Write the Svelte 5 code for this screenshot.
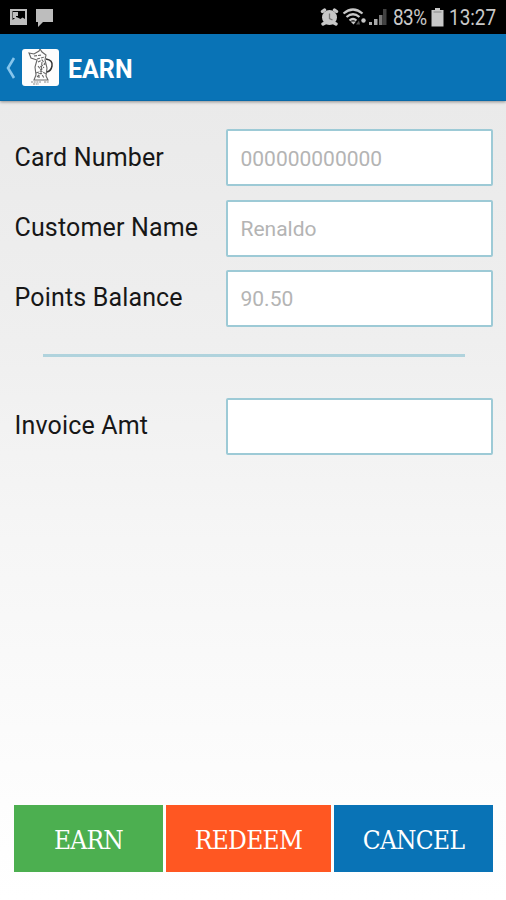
<script>
  const fields = [
    { label: 'Card Number', hint: '000000000000' },
    { label: 'Customer Name', hint: 'Renaldo' },
    { label: 'Points Balance', hint: '90.50' }
  ];
</script>

<div class="screen">
  <div class="status">
    <svg class="notes" width="46" height="20" viewBox="0 0 46 20" fill="#bdbdbd">
      <path fill-rule="evenodd" d="M1 1h17v16H1z M3.500 3v9l4-3 4 2 2-1.500L16 11V3z" />
      <path d="M4 4h5v4H7v2H4z" />
      <path d="M27 1h17v13H34l-5 5v-5h-2z" />
    </svg>
    <div class="right">
      <svg width="68" height="22" viewBox="0 0 68 22">
        <g fill="none" stroke="#c8c8c8" stroke-width="3.400" stroke-linecap="round">
          <path d="M3.500 3.500l2-1.500M17.500 3.500l-2-1.500M4 16l2-1M17 16l-2-1" />
        </g>
        <circle cx="10.500" cy="9.500" r="7.500" fill="#c8c8c8" />
        <path d="M10.500 5.500v5l3 1.500" fill="none" stroke="#777" stroke-width="1.300" />
        <g fill="none" stroke="#c8c8c8" stroke-width="2.200">
          <path d="M24.500 5.500q9.500-8 19 0" />
          <path d="M27.500 9q6.500-5.500 13 0" />
          <path d="M30.500 12.500q3.500-3 7 0" />
        </g>
        <path d="M31.500 13.500h5.500l-2.500 3z" fill="#c8c8c8" />
        <path d="M40 12.500l-3 4h4z" fill="#555" />
        <circle cx="44.500" cy="12.500" r="2.200" fill="#c8c8c8" />
        <path d="M50 17v-3h3v3z" fill="#aaa" />
        <path d="M55 17v-6h3.500v6z" fill="#aaa" />
        <path d="M60 17V7h3.500v10z" fill="#777" />
        <path d="M64 17V1h3.500v16z" fill="#414141" />
      </svg>
      <span class="pct">83%</span>
      <svg class="battery" width="13" height="19" viewBox="0 0 13 19" fill="#c8c8c8">
        <path d="M4 0h5v2h3.500v16.500h-12V2H4z" />
        <path d="M2.500 4h8" stroke="#888" />
      </svg>
      <span class="time">13:27</span>
    </div>
  </div>

  <header>
    <svg class="back" width="11" height="24" viewBox="0 0 11 24" fill="none" stroke="#86c5ec" stroke-width="2.600">
      <path d="M9 2L3 12l6 10" />
    </svg>
    <svg class="logo" width="37" height="37" viewBox="0 0 37 37">
      <rect width="37" height="37" rx="3" fill="#fdfdfd" />
      <g fill="none" stroke="#666" stroke-width="1.100">
        <path d="M7 4l5 1 5-3 1-2 2 3 4 3-1 5 2 8-1 8 2 4H12l2-5-1-8 2-7-6-2z" />
        <path d="M24 10q7 1 6 7-1 5-5 6" stroke="#333" stroke-width="1.500" />
        <path d="M12 7l8-1M15 10l8-2M16 13l4-2 3 4-5 3M16 17l3 4 3-3M20 13l-1 9M14 24l5-2 5 3M15 28l4-4 3 5M17 29v-5" stroke-dasharray="3 1" />
        <path d="M9 33h10M22 33h5M11 35h6" stroke="#888" stroke-dasharray="2 .7" />
      </g>
    </svg>
    <h1>EARN</h1>
  </header>

  <main>
    <form>
      {#each fields as field}
        <label>
          <span>{field.label}</span>
          <input readonly placeholder={field.hint} />
        </label>
      {/each}
      <hr />
      <label>
        <span>Invoice Amt</span>
        <input />
      </label>
    </form>
    <div class="actions">
      <button class="earn"><span>EARN</span></button>
      <button class="redeem"><span>REDEEM</span></button>
      <button class="cancel"><span>CANCEL</span></button>
    </div>
  </main>
</div>

<style>
  .screen {
    width: 506px;
    height: 900px;
    display: flex;
    flex-direction: column;
    overflow: hidden;
    background: #fff;
    font-family: Roboto, sans-serif;
  }
  .status {
    height: 34px;
    flex: none;
    box-sizing: border-box;
    display: flex;
    justify-content: space-between;
    align-items: flex-start;
    padding: 8px 11px 0 9px;
    background: #000;
    color: #c8c8c8;
  }
  .right {
    display: flex;
    font-size: 22px;
    line-height: 20px;
  }
  .pct,
  .time {
    transform: scaleX(0.86);
    transform-origin: left;
  }
  .pct {
    width: 34px;
    margin-left: 6px;
    letter-spacing: -0.6px;
  }
  .battery {
    margin: 0 4px 0 4px;
  }
  .time {
    width: 46px;
    margin-left: 1px;
  }
  header {
    height: 67px;
    flex: none;
    box-sizing: border-box;
    display: flex;
    align-items: center;
    padding: 1px 0 0 5px;
    background: #0973b6;
    border-bottom: 1px solid #0869a8;
    box-shadow: 0 1px 3px rgba(0, 0, 0, 0.4);
    position: relative;
  }
  .logo {
    margin: 0 0 0 6px;
  }
  h1 {
    margin: 4px 0 0 9px;
    color: #fff;
    font-size: 25px;
    font-weight: 700;
    line-height: 30px;
  }
  main {
    flex: 1;
    display: flex;
    flex-direction: column;
    justify-content: space-between;
    padding: 28.400px 13px 28px 14px;
    background: linear-gradient(#eaeaea, #efefef 30%, #f6f6f6 55%, #fdfdfd 88%, #fff);
  }
  form {
    display: flex;
    flex-direction: column;
    gap: 13.300px;
  }
  label {
    display: flex;
    align-items: center;
    justify-content: space-between;
    color: #171717;
    font-size: 25px;
    letter-spacing: 0.16px;
  }
  label span {
    padding-left: 0.5px;
    margin-top: -1px;
  }
  input {
    width: 267px;
    height: 57px;
    box-sizing: border-box;
    padding: 2px 12.500px 0;
    border: 2px solid #9dcad6;
    border-radius: 2px;
    background: #fff;
    color: #222;
    font: 21px Roboto, sans-serif;
    outline: none;
  }
  input::placeholder {
    color: #b4b4b4;
    opacity: 1;
  }
  hr {
    width: 422px;
    height: 3px;
    margin: 14px 0 27px 28.500px;
    border: 0;
    background: #b0d3dd;
  }
  .actions {
    display: flex;
    gap: 3px;
  }
  button {
    height: 67px;
    padding: 2px 0 0;
    border: 0;
    color: #fff;
    font: 26px 'DejaVu Serif Condensed', 'DejaVu Serif', serif;
    letter-spacing: -0.7px;
  }
  .earn {
    width: 149px;
    background: #4caf50;
  }
  .redeem {
    width: 165px;
    background: #ff5722;
  }
  .cancel {
    width: 159px;
    background: #0973b6;
  }
</style>
